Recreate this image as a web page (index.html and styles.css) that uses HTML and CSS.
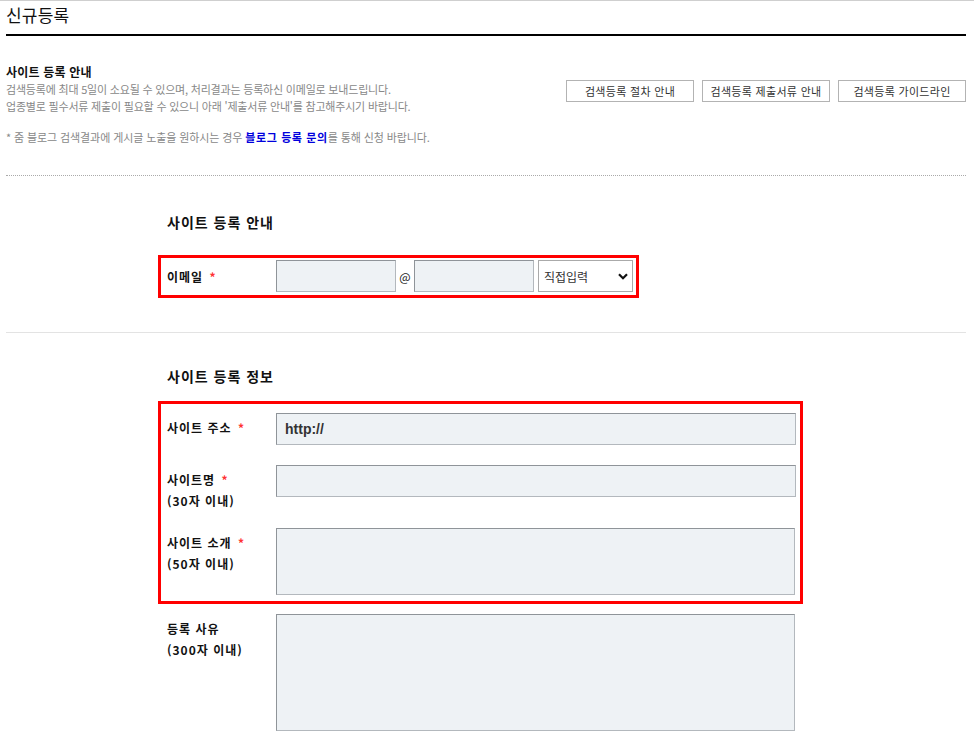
FILE: index.html
```html
<!DOCTYPE html>
<html lang="ko">
<head>
    <meta charset="UTF-8">
    <meta name="viewport" content="width=device-width, initial-scale=1.0">
    <title>신규등록</title>
    <link rel="stylesheet" href="styles.css">
</head>
<body>

    <div class="wrap">
        <h2 class="page-title">신규등록</h2>

        <!-- 안내 문구 + 버튼 -->
        <div class="guide">
            <div class="guide-text">
                <strong class="guide-tit">사이트 등록 안내</strong>
                <p>검색등록에 최대 5일이 소요될 수 있으며, 처리결과는 등록하신 이메일로 보내드립니다.<br>업종별로 필수서류 제출이 필요할 수 있으니 아래 '제출서류 안내'를 참고해주시기 바랍니다.</p>
                <p class="note">* 줌 블로그 검색결과에 게시글 노출을 원하시는 경우 <a href="#">블로그 등록 문의</a>를 통해 신청 바랍니다.</p>
            </div>
            <div class="guide-btns">
                <button type="button">검색등록 절차 안내</button>
                <button type="button">검색등록 제출서류 안내</button>
                <button type="button">검색등록 가이드라인</button>
            </div>
        </div>

        <!-- 이메일 -->
        <div class="section section-dotted">
            <h3>사이트 등록 안내</h3>
            <div class="form-box email-box">
                <div class="form-row email-row">
                    <label class="form-label" for="emailId">이메일 <em>*</em></label>
                    <input type="text" id="emailId" class="inp inp-email">
                    <span class="at">@</span>
                    <input type="text" id="emailDomain" class="inp inp-email">
                    <div class="select-wrap">
                        <select id="emailSelect">
                            <option>직접입력</option>
                            <option>naver.com</option>
                            <option>gmail.com</option>
                        </select>
                        <svg class="select-arrow" width="10" height="7" viewBox="0 0 10 7"><path d="M1 1.2 5 5.2 9 1.2" fill="none" stroke="#111" stroke-width="2.2"/></svg>
                    </div>
                </div>
            </div>
        </div>

        <!-- 사이트 정보 -->
        <div class="section section-solid">
            <h3 class="info-tit">사이트 등록 정보</h3>
            <div class="form-box site-box">
                <div class="form-row">
                    <label class="form-label" for="siteUrl">사이트 주소 <em>*</em></label>
                    <input type="text" id="siteUrl" class="inp inp-wide inp-url" value="http://">
                </div>
                <div class="form-row row-name">
                    <label class="form-label" for="siteName">사이트명 <em>*</em><br>(30자 이내)</label>
                    <input type="text" id="siteName" class="inp inp-wide">
                </div>
                <div class="form-row row-desc">
                    <label class="form-label" for="siteDesc">사이트 소개 <em>*</em><br>(50자 이내)</label>
                    <textarea id="siteDesc" class="inp txt-short"></textarea>
                </div>
            </div>
            <div class="form-row row-reason">
                <label class="form-label" for="siteReason">등록 사유<br>(300자 이내)</label>
                <textarea id="siteReason" class="inp txt-long"></textarea>
            </div>
        </div>
    </div>

</body>
</html>
```

FILE: styles.css
```css
:root {
    --black: #111; --gray-text: #888; --line: #e3e3e3;
    --red: #ff0000; --inp-bg: #eef2f5; --blue: #0000dd;
}
body {
    margin: 0; border-top: 1px solid #cfcfcf; background: #fff;
    font-family: "Noto Sans CJK KR", "Noto Sans", sans-serif; color: var(--black);
}
.wrap { width: 960px; margin-left: 6px; }

.page-title {
    margin: 0; font-size: 17px; font-weight: normal; line-height: 28px;
    padding-bottom: 5px; border-bottom: 2px solid #000; letter-spacing: 0.2px;
}

/* guide */
.guide { display: flex; justify-content: space-between; align-items: flex-start; }
.guide-text { padding-top: 27px; font-size: 11px; letter-spacing: -0.2px; color: var(--gray-text); }
.guide-tit { display: block; font-size: 12px; line-height: 17px; color: var(--black); letter-spacing: 0.2px; }
.guide-text p { margin: 1px 0 0; line-height: 17px; }
.guide-text p.note { margin-top: 14px; letter-spacing: -0.1px; }
.guide-text a { color: var(--blue); font-weight: bold; text-decoration: none; letter-spacing: 0.6px; }
.guide-btns { display: flex; gap: 8px; margin-top: 44px; }
.guide-btns button {
    width: 128px; height: 22px; padding: 0; background: #fff; border: 1px solid #b3b3b3;
    font-family: inherit; font-size: 11px; letter-spacing: 0.3px; color: #333; cursor: pointer;
}

/* sections */
.section { padding-left: 152px; }
.section h3 { margin: 0; padding-left: 9px; font-size: 14px; line-height: 20px; letter-spacing: 1px; }
.section-dotted { margin-top: 29px; border-top: 1px dotted #aaa; padding-top: 36px; padding-bottom: 34px; }
.section-dotted h3 { margin-bottom: 23px; }
.section-solid { border-top: 1px solid var(--line); padding-top: 33px; padding-bottom: 20px; }
.section-solid h3 { margin-bottom: 15px; }

.form-box { border: 3px solid var(--red); box-sizing: border-box; }
.email-box { width: 481px; padding: 2px 3px 3px 6px; }
.site-box { width: 645px; padding: 9px 4px 6px 6px; }

.form-row { display: flex; align-items: flex-start; }
.form-row + .form-row { margin-top: 20px; }
.form-row.row-desc { margin-top: 17px; }
.row-reason { margin-top: 10px; padding-left: 9px; }
.email-row { align-items: center; }

.form-label {
    width: 109px; flex-shrink: 0; padding-top: 4px; font-size: 12px; font-weight: bold;
    line-height: 21px; letter-spacing: 1px;
}
.email-row .form-label { padding-top: 0; }
.form-label em { font-style: normal; color: #f33; margin-left: 2px; }

.inp {
    box-sizing: border-box; height: 32px; margin: 0; padding: 0 8px;
    background: var(--inp-bg); border: 1px solid #b3b8bd;
    border-top-color: #8f9499; border-left-color: #8f9499; border-radius: 0;
    font-family: inherit; font-size: 12px; color: #333; outline: none;
}
.inp-email { width: 120px; }
.inp-wide { width: 520px; }
.inp-url { font-family: "Liberation Sans", Arial, sans-serif; font-weight: bold; font-size: 14px; color: #333; }
textarea.inp { resize: none; padding: 6px 8px; }
.txt-short { width: 519px; height: 67px; }
.txt-long { width: 519px; height: 117px; }

.at { width: 18px; text-align: center; font-size: 12px; color: #222; }

.select-wrap { position: relative; margin-left: 4px; }
.select-wrap select {
    appearance: none; -webkit-appearance: none; box-sizing: border-box;
    width: 95px; height: 32px; margin: 0; padding: 0 0 0 5px;
    background: #fff; border: 1px solid #aaa; border-radius: 0;
    font-family: inherit; font-size: 12px; letter-spacing: 0; color: #333;
}
.select-arrow { position: absolute; right: 5px; top: 13px; pointer-events: none; }
```
